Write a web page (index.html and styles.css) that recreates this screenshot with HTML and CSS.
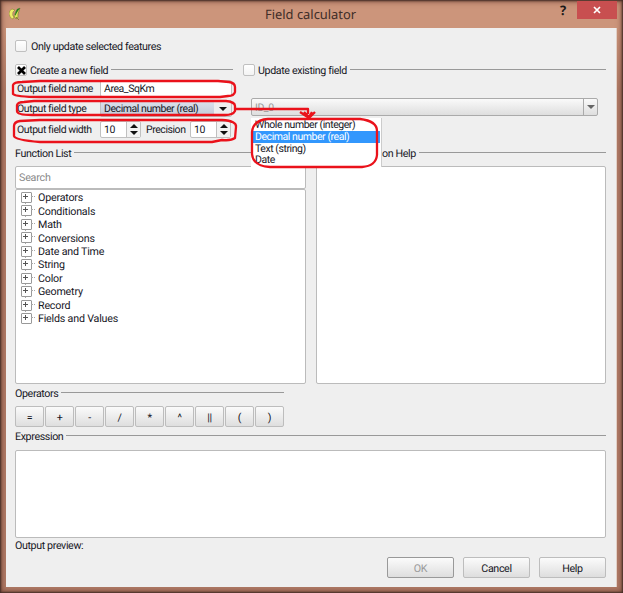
FILE: index.html
```html
<!DOCTYPE html>
<html lang="en">
<head>
<meta charset="utf-8">
<title>Field calculator</title>
<link rel="stylesheet" href="styles.css">
</head>
<body>
<div class="window">
  <header class="titlebar">
    <svg class="logo" width="13" height="14" viewBox="0 0 13 14"><path d="M3 2Q0 3 0 7Q1 12 4 12L5 10Q3 9 4 5L6 3Z" fill="#eef06a" stroke="#8b8335" stroke-width=".6"/><path d="M7 4L11 1L9 7Q10 11 7 12L5 9Z" fill="#e1e75a" stroke="#69732c" stroke-width=".6"/><path d="M6 7L8 2L11 1L9 4L6 9Z" fill="#287e22"/><path d="M7 10L10 13" stroke="#8b8335"/></svg>
    <h1>Field calculator</h1>
    <span class="question">?</span>
    <span class="close"><svg width="8" height="8" viewBox="0 0 8 8"><path d="M1 1L7 7M7 1L1 7" stroke="#fff" stroke-width="1.7"/></svg></span>
  </header>
  <main class="content">
    <label class="only"><span class="check"></span><span>Only update selected features</span></label>
    <div class="fields">
      <section class="create">
        <div class="legend"><span class="check"><svg width="9" height="9" viewBox="0 0 9 9"><path d="M1 1L8 8M8 1L1 8" stroke="#000" stroke-width="2.7"/></svg></span><span>Create a new field</span><i></i></div>
        <div class="row name"><span class="lab">Output field name</span><span class="input">Area_SqKm</span></div>
        <div class="row type"><span class="lab">Output field type</span><span class="input select"><span>Decimal number (real)</span><b class="arrow"><u class="down"></u></b></span></div>
        <div class="row width"><span class="lab">Output field width</span><span class="input spin"><span>10</span><b><u class="up"></u><u class="down"></u></b></span><span class="prec">Precision</span><span class="input spin"><span>10</span><b><u class="up"></u><u class="down"></u></b></span></div>
      </section>
      <section class="update">
        <div class="legend"><span class="check"></span><span>Update existing field</span><i></i></div>
        <div class="combo"><span>ID_0</span><b><u class="down"></u></b></div>
      </section>
    </div>
    <div class="functions">
      <section class="list">
        <div class="legend"><span>Function List</span><i></i></div>
        <div class="search">Search</div>
        <ul class="tree">
          <li><em></em>Operators</li><li><em></em>Conditionals</li><li><em></em>Math</li><li><em></em>Conversions</li><li><em></em>Date and Time</li><li><em></em>String</li><li><em></em>Color</li><li><em></em>Geometry</li><li><em></em>Record</li><li><em></em>Fields and Values</li>
        </ul>
      </section>
      <section class="help">
        <div class="legend"><span>on Help</span><i></i></div>
        <div class="pane"></div>
      </section>
    </div>
    <section class="operators">
      <div class="legend"><span>Operators</span><i></i></div>
      <div class="keys"><span class="btn">=</span><span class="btn">+</span><span class="btn">-</span><span class="btn">/</span><span class="btn">*</span><span class="btn">^</span><span class="btn">||</span><span class="btn">(</span><span class="btn">)</span></div>
    </section>
    <section class="expression">
      <div class="legend"><span>Expression</span><i></i></div>
      <div class="editor"></div>
    </section>
    <p class="preview">Output preview:</p>
    <footer class="actions"><span class="btn off">OK</span><span class="btn">Cancel</span><span class="btn">Help</span></footer>
  </main>
  <div class="popup"><span>Whole number (integer)</span><span class="on">Decimal number (real)</span><span>Text (string)</span><span>Date</span></div>
  <svg class="marks" width="623" height="593" viewBox="0 0 623 593">
    <path d="M22 82L40 81H218L229 82Q235 83 235 87V92Q234 96 228 96L220 97H40Q16 97 13 94V85Q14 82 22 82Z"/>
    <path d="M24 102L34 101H226Q235 102 235 106V111Q233 115 225 115H32Q17 115 17 111V105Q18 102 24 102Z"/>
    <path d="M20 121L40 120H222Q237 121 236 127L235 138Q231 141 222 140L212 142H40Q15 140 14 136V126Q14 122 20 121Z"/>
    <path d="M236 109H308V114M300 112L309 118L315 112M304 112L309 117L312 112"/>
    <path d="M268 119H360Q377 121 377 131V155Q376 166 362 167H270Q253 166 252 154V132Q253 120 268 119Z"/>
  </svg>
</div>
</body>
</html>
```
FILE: styles.css
```css
* { box-sizing: border-box; }
body { margin: 0; font: 10.7px/13px Roboto, sans-serif; letter-spacing: -.38px; text-rendering: geometricPrecision; color: #17171f; }
b, i, u, em { font-style: normal; text-decoration: none; }
.window { position: relative; width: 623px; height: 593px; padding: 0 6px 6px; background: linear-gradient(#cc957b 28px, #b07a66 90px); box-shadow: inset 0 0 2px 1px #432c25, inset 0 0 6px 1px #794a3a; overflow: hidden; }
.titlebar { height: 28px; display: grid; grid-template-columns: 14px 1fr 26px 40px; padding-left: 3px; color: #402d28; letter-spacing: 0; }
.logo { margin-top: 7px; }
h1 { margin: 0 0 0 -24px; font: 400 12.9px/28px "Noto Sans", sans-serif; padding-left: 266px; white-space: nowrap; }
.question { font: 700 13px/20px "Noto Sans", sans-serif; padding-left: 9px; color: #1b1919; }
.close { height: 18px; margin-top: 1px; background: #c84f50; display: flex; align-items: center; justify-content: center; }
.content { height: 559px; padding: 11px 10px 0 9px; background: #efefef; border-right: 1px solid #e2cfc6; }
.only, .legend { display: flex; align-items: center; height: 14px; white-space: nowrap; }
.check { width: 12px; height: 12px; flex: none; margin-right: 3px; border: 1px solid #c0c0c0; border-radius: 2px; background: linear-gradient(#fff, #f3f3f3); display: flex; align-items: center; justify-content: center; }
.only .check { margin-right: 4px; }
.legend i { flex: 1; height: 1px; background: #999; margin-left: 3px; position: relative; top: -1px; }
.fields { display: grid; grid-template-columns: 218px 363px; gap: 10px; height: 83px; margin-top: 10px; }
.row { display: flex; align-items: center; height: 17px; padding-left: 2px; white-space: nowrap; }
.row, .combo, .popup { font-size: 10.5px; letter-spacing: -.44px; }
.lab { width: 83px; }
.input { width: 132px; height: 17px; border: 1px solid #c0c0c0; border-radius: 2px; background: #fff; padding-left: 3px; line-height: 16px; }
.name { margin-top: 3px; }
.type { margin-top: 3px; }
.width { margin-top: 4px; }
.select { background: linear-gradient(#dce2ed, #c2cad8); display: flex; justify-content: space-between; }
.arrow { width: 17px; display: grid; place-items: center; background: #eee; }
.down, .up { display: block; width: 0; height: 0; border: 4px solid transparent; border-bottom: 0; border-top-color: #111; }
.up { border-top: 0; border-bottom: 4px solid #111; }
.spin { width: 41px; display: flex; justify-content: space-between; }
.spin b { width: 14px; background: #f2f2f2; border-left: 1px solid #c0c0c0; display: flex; flex-direction: column; align-items: center; justify-content: space-evenly; }
.prec { width: 49px; padding-left: 5px; }
.combo { width: 347px; height: 18px; margin: 21px 0 0 8px; border: 1px solid #aaa; border-radius: 2px; background: linear-gradient(#fafafa, #dedede); color: #999; padding-left: 3px; display: flex; justify-content: space-between; line-height: 17px; }
.combo b { width: 14px; border-left: 1px solid #aaa; display: grid; place-items: center; }
.combo u { border-top-color: #666; }
.functions { display: grid; grid-template-columns: 291px 290px; gap: 10px; height: 238px; }
.search, .tree, .pane, .editor { background: #fff; border: 1px solid #bbb; border-radius: 2px; margin: 0; }
.search { height: 23px; margin-top: 6px; color: #888; padding-left: 3px; line-height: 21px; }
.search, .tree { letter-spacing: -.2px; }
.tree { height: 195px; padding: 1px 0 0 5px; list-style: none; }
.tree li { height: 13.45px; display: flex; align-items: center; }
.tree em { width: 17px; height: 13.45px; position: relative; }
.tree em::before { content: ""; position: absolute; left: 0; top: 1px; width: 9px; height: 9px; border: 1px solid #999; border-radius: 1px; background: linear-gradient(#555,#555) 1px 3px/5px 1px no-repeat, linear-gradient(#555,#555) 3px 1px/1px 5px no-repeat; }
.tree em::after { content: ""; position: absolute; left: 10px; top: 5px; width: 4px; height: 1px; border-top: 1px dotted #aaa; }
.tree li:not(:last-child) em { background: linear-gradient(#aaa,#aaa) 4px 11px/1px 2px no-repeat; }
.help .legend { padding-left: 66px; }
.pane { height: 218px; margin-top: 6px; }
.operators { width: 269px; margin-top: 2px; height: 43px; }
.keys { display: flex; justify-content: space-between; margin-top: 6px; }
.btn { height: 21px; width: 29px; border: 1px solid #bdbdbd; border-radius: 2px; background: linear-gradient(#fbfbfb, #dedede); text-align: center; line-height: 21px; }
.expression { height: 108px; }
.editor { height: 88px; margin-top: 7px; }
.preview { margin: 2px 0 0; height: 14px; }
.actions { display: flex; justify-content: flex-end; gap: 9px; margin-top: 4px; }
.actions .btn { width: 67px; }
.actions .off { color: #999; border-color: #999; }
.popup { position: absolute; left: 251px; top: 118px; width: 131px; height: 49px; background: #fff; border-right: 1px solid #ccc; padding-top: 1px; }
.popup span { display: block; height: 11.8px; line-height: 12px; padding-left: 4px; white-space: nowrap; }
.popup .on { background: #3297fd; color: #fff; margin-right: 1px; }
.marks { position: absolute; left: 0; top: 0; fill: none; stroke: #ea121b; stroke-width: 2.3; stroke-linejoin: round; }
```
